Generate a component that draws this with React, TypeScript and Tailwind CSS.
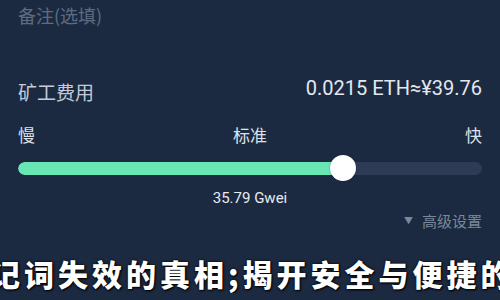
import React from "react";

export default function App() {
  const pct = 0.7;
  return (
    <div className="w-[500px] h-[300px] overflow-hidden bg-[#1c2a41] flex flex-col font-['Roboto','Noto_Sans_CJK_SC',sans-serif]">
      <div className="px-[18px]">
        <div className="mt-[5px] text-[18px] leading-[20px] text-[#5e6c82] font-['Noto_Sans_CJK_SC',sans-serif]">
          备注(选填)
        </div>
        <div className="mt-[52px] flex justify-between items-start">
          <span className="mt-[4px] text-[19px] leading-[22px] text-[#c3cbd8] font-['Noto_Sans_CJK_SC',sans-serif]">
            矿工费用
          </span>
          <span className="text-[20px] leading-[22px] text-[#e3e8ef] font-['Roboto','Noto_Sans_CJK_SC',sans-serif]">
            0.0215 ETH≈¥39.76
          </span>
        </div>
        <div className="mt-[22px] flex justify-between text-[17px] leading-[20px] text-[#dde2ea] font-['Noto_Sans_CJK_SC',sans-serif]">
          <span>慢</span>
          <span>标准</span>
          <span>快</span>
        </div>
        <div className="mt-[10px] relative h-[26px] flex items-center">
          <div className="w-full h-[13px] rounded-full bg-[#2d3b55] overflow-hidden">
            <div className="h-full bg-[#68e6b4] rounded-full" style={{ width: `${pct * 100}%` }} />
          </div>
          <div
            className="absolute top-0 w-[26px] h-[26px] rounded-full bg-white shadow-[0_0_2px_rgba(0,0,0,0.3)]"
            style={{ left: `calc(${pct * 100}% - 13px)` }}
          />
        </div>
        <div className="mt-[8px] text-center text-[15px] leading-[18px] text-[#e8ecf2]">
          35.79 Gwei
        </div>
        <div className="mt-[4px] flex justify-end items-center gap-[9px] text-[15px] leading-[20px] text-[#7b889b] font-['Noto_Sans_CJK_SC',sans-serif]">
          <span className="text-[9px] leading-[20px]">▼</span>
          <span>高级设置</span>
        </div>
      </div>
      <div className="mt-[22px] overflow-hidden whitespace-nowrap">
        <div className="ml-[-10px] text-[30px] leading-[40px] tracking-[4px] font-black text-white font-['Noto_Sans_CJK_SC',sans-serif] [text-shadow:0_0_3px_#000,1px_1px_2px_#000]">
          记词失效的真相;揭开安全与便捷的平衡
        </div>
      </div>
    </div>
  );
}
